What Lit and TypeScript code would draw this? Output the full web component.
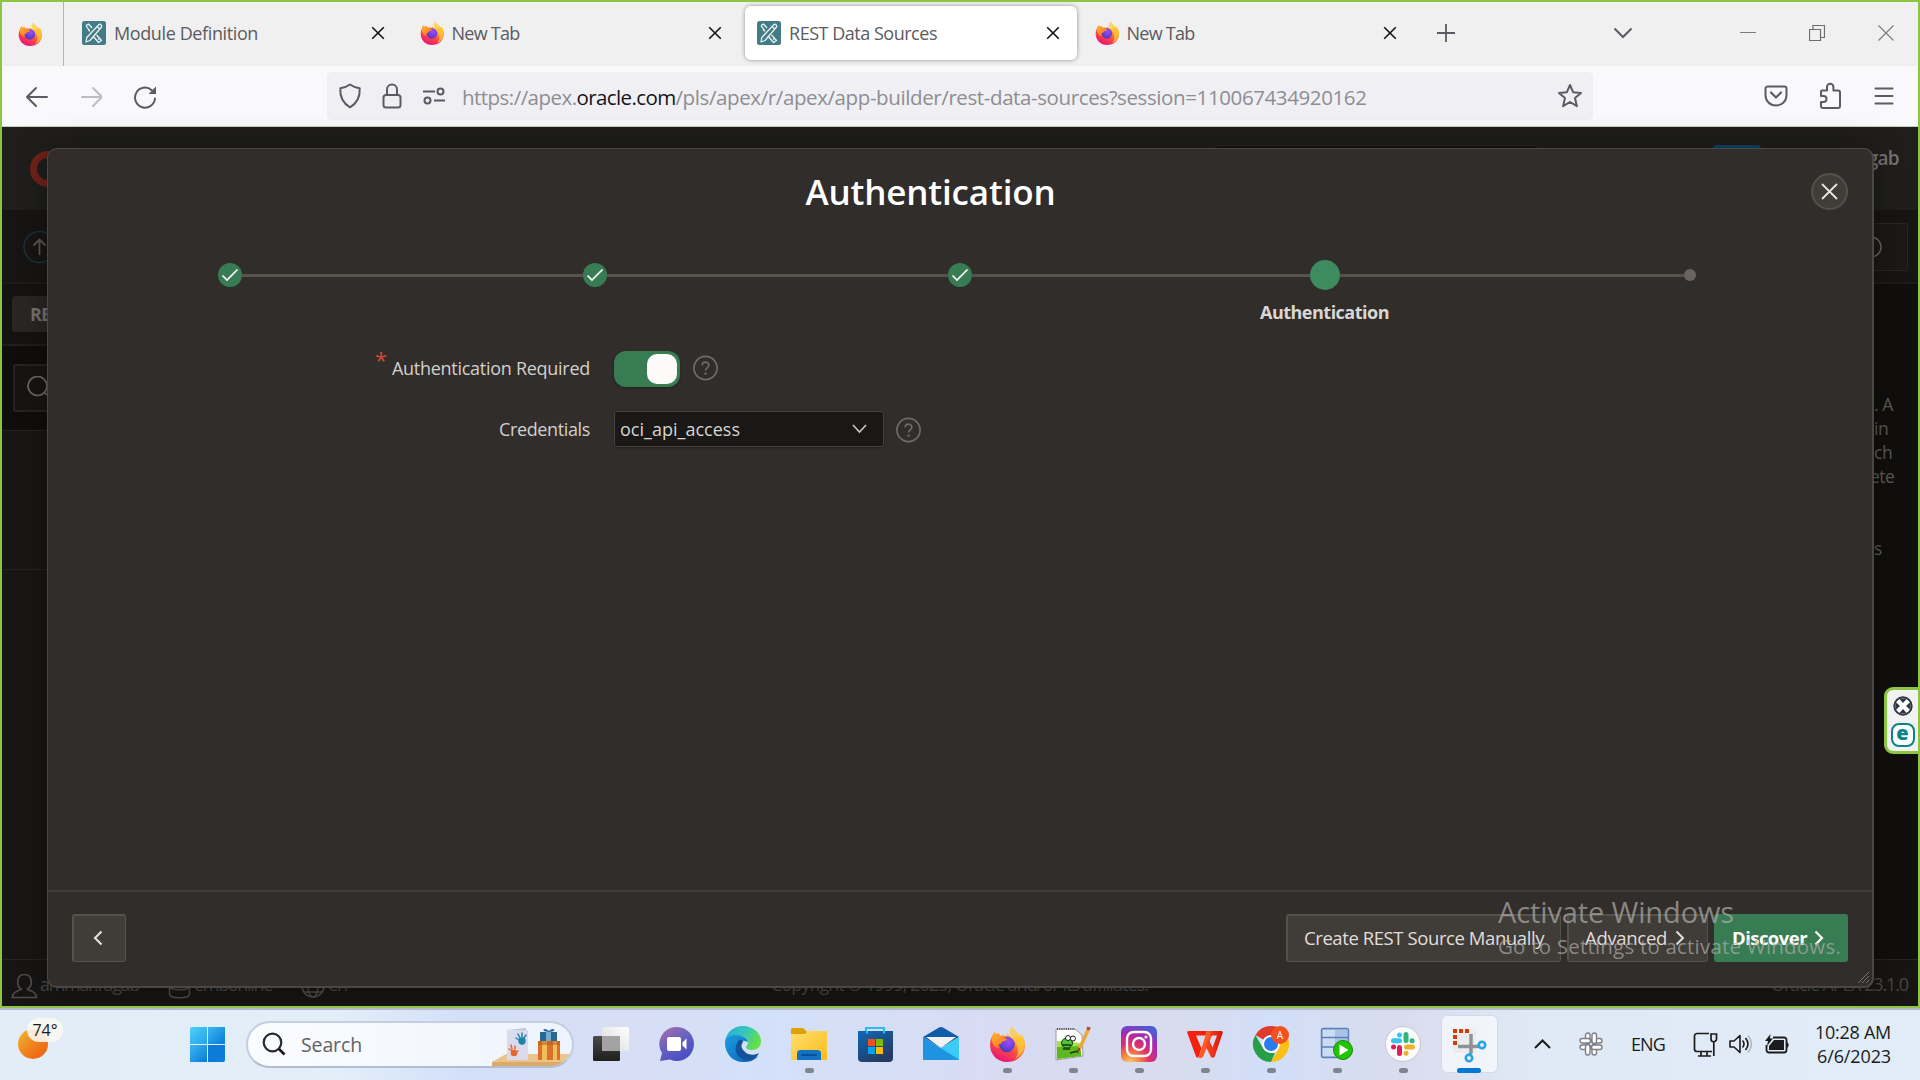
import { LitElement, html, css, svg, nothing } from "lit";
import { customElement, property } from "lit/decorators.js";
import { classMap } from "lit/directives/class-map.js";

/* Text whose tracking is computed so that it fills a given width. */
@customElement("fit-label")
class FitLabel extends LitElement {
  static styles = css`
    :host { display: inline-block; white-space: pre; flex: none; }
    .t { display: inline-block; white-space: pre; }
  `;
  @property({ type: Number }) w = 0;
  firstUpdated() {
    const el = this.renderRoot.querySelector(".t") as HTMLElement;
    const n = (this.textContent || "").length;
    const natural = el.getBoundingClientRect().width;
    if (this.w && n) {
      el.style.letterSpacing = `${(this.w - natural) / n}px`;
    }
    this.style.width = `${this.w}px`;
  }
  render() {
    return html`<span class="t"><slot></slot></span>`;
  }
}

const firefox = (s: number, id: string) => html`<svg width=${s} height=${s} viewBox="0 0 36 36">
  <defs>
    <linearGradient id="${id}a" x1=".8" y1="0" x2=".3" y2="1"><stop offset="0" stop-color="#fff44f"/><stop offset=".35" stop-color="#ffa32b"/><stop offset=".65" stop-color="#ff4a3f"/><stop offset="1" stop-color="#e5107f"/></linearGradient>
    <radialGradient id="${id}b" cx=".6" cy=".3" r=".8"><stop offset="0" stop-color="#a14bf5"/><stop offset=".7" stop-color="#5b3fd4"/><stop offset="1" stop-color="#43309c"/></radialGradient>
    <linearGradient id="${id}c" x1="0" y1="0" x2="1" y2="1"><stop offset="0" stop-color="#ffb62e"/><stop offset="1" stop-color="#ff6a2a"/></linearGradient>
  </defs>
  <path d="M23 0c-3 3-5 5-5 8l5 4 10-3c2 3 3 6 3 10 0 10-8 17-18 17S1 28 1 19c0-5 2-9 4-12l1 3 2-3 2 3c3-1 5-1 8 0 0-4 2-7 5-10z" fill="url(#${id}a)"/>
  <path d="M23 0c1 5 8 6 12 15 2 8-2 15-9 18 4-5 4-12 0-17-3-4-8-7-3-16z" fill="#ffc93a" opacity=".75"/>
  <circle cx="18" cy="18.500" r="7.800" fill="url(#${id}b)"/>
  <path d="M3 10c1-2 2-3 3-4l1 4 3-3 1 3c2 0 4 1 5 2l2 1c0 2-4 2-5 3s0 2-2 2-2 2-1 4c-5 0-8-6-7-12z" fill="url(#${id}c)"/>
</svg>`;

const apexIcon = html`<svg width="24" height="24" viewBox="0 0 24 24">
  <rect width="24" height="24" rx="2.500" fill="#437c85"/>
  <g fill="none" stroke="#e9f3f4" stroke-width="1.300" stroke-linejoin="round">
    <path d="M4 4.500 6.500 3 10 7M4 4.500 8 10.500M14.500 14l5 5.500-3 2-5.500-6.500"/>
    <path d="M17 3.500c1-1 3.500 1 2.500 2.500L8 19.500 4 21l.8-4.500z"/>
    <path d="M15 5.500 18 8M6 9.500 7.500 8.500M16 18.500l1.500-1"/>
  </g></svg>`;

const closeX = html`<svg width="14" height="14" viewBox="0 0 14 14"><path d="M1.200 1.200 12.800 12.800M12.800 1.200 1.200 12.800" stroke="#15141a" stroke-width="1.600"/></svg>`;

/* ---------- browser chrome ---------- */
@customElement("browser-chrome")
class BrowserChrome extends LitElement {
  static styles = css`
    :host { display: block; font-family: "Open Sans", "Noto Sans", sans-serif; }
    svg { display: block; flex: none; }
    .strip { height: 64px; background: #f0f0f0; display: flex; align-items: center; padding-bottom: 2px; box-sizing: border-box; }
    .pin { width: 62px; height: 64px; margin-bottom: -2px; box-sizing: border-box; border-right: 1px solid #b4b4b6; display: flex; align-items: center; padding-left: 16px; }
    .tabs { display: flex; padding-left: 3px; }
    .tab { width: 337.500px; height: 54px; box-sizing: border-box; padding: 0 3px; display: flex; }
    .body { flex: 1; border-radius: 6px; display: flex; align-items: center; padding: 0 17px 0 12px; color: #5b5b60; font-size: 18px; }
    .active .body { background: #fff; box-shadow: 0 0 4px rgba(0, 0, 0, 0.4); }
    .lbl { flex: 1; margin-left: 8px; }
    .plus { margin-left: 20px; }
    .chev { margin-left: 158px; }
    .win { margin-left: auto; padding-right: 24px; display: flex; align-items: center; gap: 53px; }
    .bar { height: 60px; background: #f9f9fb; border-bottom: 1px solid #c5d0c0; box-sizing: content-box; display: flex; align-items: center; padding-left: 20px; }
    .nav { display: flex; gap: 28px; width: 305px; margin-top: 2px; }
    .url { width: 1266px; height: 48px; border-radius: 5px; background: #f0f0f4; display: flex; align-items: center; box-sizing: border-box; padding: 0 10px 0 11px; gap: 18px; }
    .addr { display: flex; flex: 1; font-size: 20.500px; color: #8d8d93; margin: 2px 0 0 -2px; }
    .addr .dom { color: #15141a; }
    .end { display: flex; align-items: center; gap: 29px; margin-left: 171px; }
    .end svg:last-child { margin-left: 2px; }
  `;
  private tab(kind: string, title: string, w: number, id: string, active = false) {
    return html`<div class=${classMap({ tab: true, active })}><div class="body">
      ${kind === "apex" ? apexIcon : firefox(24, id)}
      <div class="lbl"><fit-label .w=${w}>${title}</fit-label></div>${closeX}
    </div></div>`;
  }
  render() {
    return html`
      <div class="strip">
        <div class="pin">${firefox(24, "p")}</div>
        <div class="tabs">
          ${this.tab("apex", "Module Definition", 144, "q")}
          ${this.tab("ff", "New Tab", 68, "r")}
          ${this.tab("apex", "REST Data Sources", 148, "s", true)}
          ${this.tab("ff", "New Tab", 68, "t")}
        </div>
        <svg class="plus" width="18" height="18" viewBox="0 0 18 18"><path d="M9 0V18M0 9H18" stroke="#5b5b66" stroke-width="1.800"/></svg>
        <svg class="chev" width="20" height="12" viewBox="0 0 20 12"><path d="M1.500 1.500 10 10 18.500 1.500" fill="none" stroke="#5b5b66" stroke-width="2"/></svg>
        <div class="win">
          <svg width="16" height="16" viewBox="0 0 16 16"><path d="M0 7.500H16" stroke="#7d7d7d"/></svg>
          <svg width="16" height="16" viewBox="0 0 16 16"><path d="M.5 4.500H11.500V15.500H.5zM4 4V.5H15.500V12.500H12" fill="none" stroke="#6d6d6d" stroke-width="1.200"/></svg>
          <svg width="16" height="16" viewBox="0 0 16 16"><path d="M.5.5 15.500 15.500M15.500.5.5 15.500" stroke="#7d7d7d" stroke-width="1.200"/></svg>
        </div>
      </div>
      <div class="bar">
        <div class="nav">
          <svg width="26" height="26" viewBox="0 0 26 26"><path d="M25 13H6M14 4 5 13l9 9" fill="none" stroke="#5b5b66" stroke-width="2" stroke-linecap="round" stroke-linejoin="round"/></svg>
          <svg width="26" height="26" viewBox="0 0 26 26"><path d="M6 13H25M17 4l9 9-9 9" fill="none" stroke="#bdbdc1" stroke-width="2" stroke-linecap="round" stroke-linejoin="round"/></svg>
          <svg width="26" height="26" viewBox="0 0 26 26"><path d="M25 14.500A10 10 0 1 1 21.500 6" fill="none" stroke="#5b5b66" stroke-width="2" stroke-linecap="round"/><path d="M26 2.500V10h-7.500z" fill="#5b5b66"/></svg>
        </div>
        <div class="url">
          <svg width="24" height="26" viewBox="0 0 24 26"><path d="M12 1.500c3 2.200 6 3.200 9.700 3.800.5 8.500-2.700 15-9.700 19C5 20.300 1.800 13.800 2.300 5.300 6 4.700 9 3.700 12 1.500z" fill="none" stroke="#5b5b66" stroke-width="2" stroke-linejoin="round"/></svg>
          <svg width="24" height="26" viewBox="0 0 24 26"><rect x="3.500" y="12" width="17" height="12.500" rx="2.500" fill="none" stroke="#5b5b66" stroke-width="2"/><path d="M7 12V6.500a5 5 0 0 1 10 0V12" fill="none" stroke="#5b5b66" stroke-width="2"/></svg>
          <svg width="24" height="18" viewBox="0 0 24 18"><g fill="none" stroke="#5b5b66" stroke-width="2"><path d="M1 4.500H13M12 13.500H23"/><circle cx="18.500" cy="4.500" r="3"/><circle cx="5.500" cy="13.500" r="3"/></g></svg>
          <div class="addr"><fit-label .w=${114.500}>https://apex.</fit-label><fit-label class="dom" .w=${99}>oracle.com</fit-label><fit-label .w=${691}>/pls/apex/r/apex/app-builder/rest-data-sources?session=110067434920162</fit-label></div>
          <svg width="26" height="26" viewBox="0 0 26 26"><path d="m13 2 3.100 7.200 7.900.7-6 5.200 1.900 8.100L13 19l-6.900 4.200L8 15.100 2 9.900l7.900-.7z" fill="none" stroke="#5b5b66" stroke-width="2" stroke-linejoin="round"/></svg>
        </div>
        <div class="end">
          <svg width="24" height="24" viewBox="0 0 24 24"><path d="M3.500 2.500h17a2 2 0 0 1 2 2V11c0 6-4.500 10.500-10.500 10.500S1.500 17 1.500 11V4.500a2 2 0 0 1 2-2z" fill="none" stroke="#5b5b66" stroke-width="2"/><path d="m7 8.500 5 5 5-5" fill="none" stroke="#5b5b66" stroke-width="2.200" stroke-linecap="round" stroke-linejoin="round"/></svg>
          <svg width="26" height="28" viewBox="0 0 26 28"><path d="M5 8.500h5V5a3.200 3.200 0 0 1 6.400 0v3.500H21a2 2 0 0 1 2 2V24a2 2 0 0 1-2 2H6a2 2 0 0 1-2-2v-4h2.500a3 3 0 0 0 0-6H4V9.500a1 1 0 0 1 1-1z" fill="none" stroke="#5b5b66" stroke-width="2" stroke-linejoin="round"/></svg>
          <svg width="20" height="20" viewBox="0 0 20 20"><path d="M1.500 2.500h17M1.500 10h17M1.500 17.500h17" stroke="#5b5b66" stroke-width="2" stroke-linecap="round"/></svg>
        </div>
      </div>`;
  }
}

/* ---------- dimmed page behind the dialog ---------- */
@customElement("dimmed-page")
class DimmedPage extends LitElement {
  static styles = css`
    :host { display: flex; flex-direction: column; height: 879px; background: #100f0d; font-family: "Open Sans", "Noto Sans", sans-serif; color: #75726f; }
    svg { display: block; flex: none; }
    .head { height: 83px; background: #1f1e1c; display: flex; justify-content: space-between; padding: 0 19px 0 28px; box-sizing: border-box; }
    .logo { padding-top: 24px; }
    .mid { margin-left: auto; display: flex; padding-top: 18px; }
    .find { width: 326px; height: 30px; border: 1px solid #2c2a26; background: #161513; border-radius: 4px; box-sizing: border-box; }
    .blue { width: 48px; height: 30px; border-radius: 4px; background: #0e4467; margin-left: 173px; }
    .user { width: 138px; text-align: right; font-size: 19px; letter-spacing: -0.7px; font-weight: 600; line-height: 28px; padding-top: 17px; }
    .crumb { height: 74px; background: #161513; border-bottom: 2px solid #1d1c1a; box-sizing: border-box; display: flex; align-items: center; justify-content: space-between; padding: 1px 10px 0 21px; }
    .help { width: 60px; height: 48px; border: 1px solid #292725; border-radius: 3px; background: #1a1917; display: flex; align-items: center; justify-content: center; box-sizing: border-box; padding-right: 13px; }
    .main { flex: 1; display: flex; background: #100f0d; }
    .left { width: 400px; background: #171614; }
    .tabrow { height: 62px; border-bottom: 2px solid #1f1e1c; background: #141311; box-sizing: border-box; padding: 12px 0 0 10px; }
    .rest { width: 180px; height: 36px; border-radius: 4px; background: #292623; font-size: 18px; letter-spacing: -1px; font-weight: 700; line-height: 36px; padding-left: 18px; box-sizing: border-box; }
    .sr { height: 85px; background: #0f0e0d; border-bottom: 1px solid #242321; box-sizing: border-box; padding: 18px 0 0 11px; }
    .box { width: 300px; height: 48px; border: 2px solid #262422; border-radius: 3px; background: #161513; box-sizing: border-box; padding: 10px 12px; }
    .blk { height: 139px; border-bottom: 1px solid #242321; box-sizing: border-box; }
    .right { margin-left: auto; padding: 108px 0 0; width: 48px; font-size: 17.500px; letter-spacing: -0.500px; line-height: 24px; color: #5d5b59; white-space: pre; }
    .foot { height: 47px; background: #161513; border-top: 1px solid #262523; box-sizing: border-box; display: flex; align-items: flex-start; padding: 7px 10px 0 9px; font-size: 18px; line-height: 34px; color: #474543; }
    .foot svg { margin-top: 6px; }
    .foot .db, .foot .gl { margin-left: 29px; }
    .foot fit-label { margin-left: 1px; }
    .foot .db + fit-label, .foot .gl + fit-label { margin-left: 3px; }
    .foot .copy { margin-left: 424px; }
    .foot .ver { margin-left: auto; }
  `;
  render() {
    return html`
      <div class="head">
        <div class="logo"><svg width="60" height="36" viewBox="0 0 60 36"><rect x="3.500" y="3.500" width="53" height="29" rx="14.500" fill="none" stroke="#6f2219" stroke-width="7"/></svg></div>
        <div class="mid"><div class="find"></div><div class="blue"></div></div>
        <div class="user">ammar ragab</div>
      </div>
      <div class="crumb">
        <svg width="34" height="34" viewBox="0 0 34 34"><circle cx="16.500" cy="17" r="15.500" fill="none" stroke="#1c323a" stroke-width="1.500"/><path d="M16.500 25V10M10.500 15.500l6-6 6 6" fill="none" stroke="#5a5856" stroke-width="1.800"/></svg>
        <div class="help"><svg width="22" height="22" viewBox="0 0 22 22"><circle cx="10" cy="11" r="10" fill="none" stroke="#666462" stroke-width="1.500"/></svg></div>
      </div>
      <div class="main">
        <div class="left">
          <div class="tabrow"><div class="rest">REST Data</div></div>
          <div class="sr"><div class="box"><svg width="24" height="24" viewBox="0 0 24 24"><circle cx="10.500" cy="10" r="9.500" fill="none" stroke="#6b6967" stroke-width="1.700"/><path d="m17.500 16.500 6 6" stroke="#6b6967" stroke-width="1.700"/></svg></div></div>
          <div class="blk"></div>
        </div>
        <div class="right"> . A
 in
 ch
ete


 s</div>
      </div>
      <div class="foot">
        <svg width="28" height="26" viewBox="0 0 28 26"><path d="M13.500 1.500c9 0 8 13 3 14.500 1 2 9 1.500 9 8.500H1.300c0-7 8-6.500 9-8.500C5.500 14.500 4.500 1.500 13.500 1.500z" fill="none" stroke="#4e4c4a" stroke-width="1.700"/></svg>
        <fit-label .w=${99}>ammar.ragab</fit-label>
        <svg class="db" width="23" height="26" viewBox="0 0 23 26"><path d="M1.500 5c0-5 20-5 20 0v16c0 5-20 5-20 0zc0 5 20 5 20 0M1.500 13c0 5 20 5 20 0" fill="none" stroke="#4e4c4a" stroke-width="1.500"/></svg>
        <fit-label .w=${78}>embonline</fit-label>
        <svg class="gl" width="24" height="26" viewBox="0 0 24 26"><g fill="none" stroke="#4e4c4a" stroke-width="1.500"><circle cx="12" cy="13" r="11"/><ellipse cx="12" cy="13" rx="5" ry="11"/><path d="M1 13H23M3 7H21M3 19H21"/></g></svg>
        <fit-label .w=${19}>en</fit-label>
        <fit-label class="copy" .w=${377}>Copyright © 1999, 2023, Oracle and/or its affiliates.</fit-label>
        <fit-label class="ver" .w=${137}>Oracle APEX 23.1.0</fit-label>
      </div>`;
  }
}

/* ---------- wizard dialog ---------- */
const helpIcon = html`<svg class="q" width="25" height="26" viewBox="0 0 25 26"><circle cx="12.500" cy="13" r="11.600" fill="none" stroke="#6f6b67" stroke-width="1.700"/><path d="M9.200 10.200c0-4.200 6.600-4.200 6.600 0 0 2.600-3.300 2.600-3.300 5.300" fill="none" stroke="#6f6b67" stroke-width="1.700"/><circle cx="12.500" cy="18.600" r="1.200" fill="#6f6b67"/></svg>`;
const next = (w: number) => html`<svg width="10" height="16" viewBox="0 0 10 16"><path d="M1.500 1.500 8 8l-6.500 6.500" fill="none" stroke="currentColor" stroke-width=${w}/></svg>`;

@customElement("wizard-dialog")
class WizardDialog extends LitElement {
  static styles = css`
    :host { display: flex; flex-direction: column; box-sizing: border-box; background: #312d2a; border: 1px solid #4b4844; border-right-width: 2px; border-bottom-width: 2px; border-radius: 10px; box-shadow: 0 0 30px rgba(0, 0, 0, 0.35); font-family: "Open Sans", "Noto Sans", sans-serif; color: #d2d0cd; font-size: 18px; overflow: hidden; }
    svg { display: block; flex: none; }
    .head { height: 85px; display: grid; grid-template-columns: 1fr auto 1fr; align-items: center; padding: 0 24px 0 0; box-sizing: border-box; }
    .title { font-size: 35px; font-weight: 600; color: #fff; grid-column: 2; line-height: 48px; margin: 1px 35px 0 0; }
    .x { justify-self: end; width: 37px; height: 37px; border-radius: 50%; border: 2px solid #55514a; background: #403c38; box-sizing: border-box; display: grid; place-items: center; color: #e6e4e2; margin-bottom: 1px; }
    .steps { display: grid; grid-template-columns: repeat(5, 365px); height: 97px; margin-left: -1px; align-items: start; }
    .step { display: flex; flex-direction: column; align-items: center; }
    .rail { height: 30px; margin-top: 26px; width: 100%; display: flex; align-items: center; }
    .seg { flex: 1; height: 3px; background: #57534b; }
    .seg.none { background: none; }
    .dot { width: 24px; height: 24px; border-radius: 50%; background: #387c53; display: grid; place-items: center; }
    .cur .dot { width: 30px; height: 30px; background: #3d8c60; }
    .todo .dot { width: 12px; height: 12px; background: #6b645e; }
    .name { font-weight: 700; margin-top: 10px; line-height: 24px; color: #d9d7d4; }
    .form { flex: 1; display: grid; grid-template-columns: 542px 1fr; column-gap: 24px; grid-template-rows: 36px 36px; row-gap: 24px; padding-top: 20px; align-items: center; }
    .lab { display: flex; justify-content: flex-end; padding-bottom: 2px; }
    .low { padding-bottom: 0; }
    .star { color: #d04a36; font-size: 22px; line-height: 20px; height: 20px; margin: -7px 5px 0 0; width: 12px; }
    .ctl { display: flex; align-items: center; gap: 12px; }
    .q { margin: -2px 0 0 1px; }
    .low .q { margin-top: 2px; }
    .switch { width: 66px; height: 36px; border-radius: 12px; background: #387c53; box-sizing: border-box; padding: 3px 3px 3px 33px; box-shadow: 0 1px 3px rgba(0, 0, 0, 0.3); }
    .knob { width: 30px; height: 30px; border-radius: 10px; background: #fcfbfa; }
    .select { width: 270px; height: 36px; box-sizing: border-box; border: 1px solid #45413e; border-radius: 3px; background: #191816; display: flex; align-items: center; justify-content: space-between; padding: 0 16px 0 5px; color: #d6d4d1; box-shadow: 0 1px 3px rgba(0, 0, 0, 0.3); }
    .low .q { margin-left: 0; }
    .foot { height: 96px; box-sizing: border-box; border-top: 2px solid #403c39; padding: 0 24px 3px 24px; display: flex; align-items: center; gap: 6px; }
    .btn { height: 48px; box-sizing: border-box; border: 1px solid #55524b; border-top-width: 2px; border-left-width: 2px; border-radius: 3px; background: #403c37; display: flex; align-items: center; color: #e0dedb; line-height: 40px; font-size: 18.500px; padding: 0 16px; }
    .back { width: 54px; justify-content: center; padding: 0 3px 0 0; margin-right: auto; }
    .adv { gap: 8px; width: 141px; }
    .create { width: 275px; }
    .go { background: #387c53; border-color: #387c53; color: #fff; font-weight: 700; width: 134px; gap: 7px; }
  `;
  private step(i: number) {
    const kind = i < 3 ? "done" : i === 3 ? "cur" : "todo";
    return html`<div class="step ${kind}">
      <div class="rail">
        <div class="seg ${i === 0 ? "none" : ""}"></div>
        <div class="dot">${kind === "done" ? html`<svg width="18" height="14" viewBox="0 0 18 14"><path d="M1.500 7.500 6 12 16.500 1.500" fill="none" stroke="#fff" stroke-width="1.700"/></svg>` : nothing}</div>
        <div class="seg ${i === 4 ? "none" : ""}"></div>
      </div>
      ${kind === "cur" ? html`<div class="name"><fit-label .w=${129}>Authentication</fit-label></div>` : nothing}
    </div>`;
  }
  render() {
    return html`
      <div class="head">
        <div class="title"><fit-label .w=${250}>Authentication</fit-label></div>
        <div class="x"><svg width="17" height="17" viewBox="0 0 17 17"><path d="m1 1 15 15M16 1 1 16" stroke="currentColor" stroke-width="1.800"/></svg></div>
      </div>
      <div class="steps">${[0, 1, 2, 3, 4].map((i) => this.step(i))}</div>
      <div class="form">
        <div class="lab"><span class="star">*</span><fit-label .w=${198}>Authentication Required</fit-label></div>
        <div class="ctl"><div class="switch"><div class="knob"></div></div>${helpIcon}</div>
        <div class="lab low"><fit-label .w=${91}>Credentials</fit-label></div>
        <div class="ctl low"><div class="select"><fit-label .w=${120}>oci_api_access</fit-label><svg width="15" height="10" viewBox="0 0 15 10"><path d="m1 1 6.500 7L14 1" fill="none" stroke="#c9c7c4" stroke-width="1.600"/></svg></div>${helpIcon}</div>
      </div>
      <div class="foot">
        <div class="btn back"><svg width="10" height="16" viewBox="0 0 10 16"><path d="M8.500 1.500 2 8l6.500 6.500" fill="none" stroke="currentColor" stroke-width="2.200"/></svg></div>
        <div class="btn create"><fit-label .w=${240}>Create REST Source Manually</fit-label></div>
        <div class="btn adv"><fit-label .w=${82}>Advanced</fit-label>${next(2)}</div>
        <div class="btn go"><fit-label .w=${75}>Discover</fit-label>${next(2.2)}</div>
      </div>`;
  }
}

/* ---------- taskbar ---------- */
const apps: Array<{ id: string; run: boolean; icon: unknown }> = [
  { id: "view", run: false, icon: svg`<defs><linearGradient id="tv" x2="0" y2="1"><stop stop-color="#4a4a48"/><stop offset="1" stop-color="#1e1e1d"/></linearGradient><linearGradient id="tw" x1="1" x2="0" y2="1"><stop stop-color="#fff"/><stop offset="1" stop-color="#d8d8d8"/></linearGradient></defs><rect x="0" y="10" width="27" height="25" rx="1.500" fill="url(#tv)"/><rect x="9" y="1" width="27" height="24" rx="1.500" fill="url(#tw)"/><path d="M9 10H27V25H10.500A1.500 1.500 0 0 1 9 23.500z" fill="#a3a3a3"/>` },
  { id: "chat", run: false, icon: svg`<defs><linearGradient id="ch" x1="0" y1="0" x2=".6" y2="1"><stop stop-color="#b06fa8"/><stop offset=".5" stop-color="#6a62bf"/><stop offset="1" stop-color="#4a4fc4"/></linearGradient></defs><path d="M18 1a17 17 0 1 1-7 32.500L1 35l2-8A17 17 0 0 1 18 1z" fill="url(#ch)"/><rect x="8" y="11" width="14" height="14" rx="2" fill="#fff"/><path d="m23.500 16.500 4-4v11l-4-4z" fill="#fff"/>` },
  { id: "edge", run: false, icon: svg`<defs><linearGradient id="e1" x2="1" y2=".4"><stop stop-color="#2aa8e0"/><stop offset=".6" stop-color="#36c9b5"/><stop offset="1" stop-color="#65df4a"/></linearGradient><linearGradient id="e2" x2="1" y2="1"><stop stop-color="#1b9de2"/><stop offset="1" stop-color="#0a61b5"/></linearGradient></defs><path d="M0 16C1 6 9 0 18 0c10 0 18 7 18 15 0 6-4 9-9 9-4 0-6-1-6-3 0-1 2-2 2-5 0-5-6-7-11-6C6 11 2 13 0 16z" fill="url(#e1)"/><path d="M0 17c0-6 6-8 11-8 6 0 12 3 12 7-9-5-14 8-6 14 5 4 11 3 16 0-4 5-9 6-15 6C8 36 0 28 0 17z" fill="url(#e2)"/><path d="M14 14c-6 7-4 16 5 20 6 2 12-1 15-7-5 3-11 2-14-1s-5-6-2-10c0-1-2-3-4-2z" fill="#12539c"/>` },
  { id: "files", run: true, icon: svg`<defs><linearGradient id="f1" x2="1" y2="1"><stop stop-color="#ffdf70"/><stop offset="1" stop-color="#fbbc1b"/></linearGradient></defs><path d="M0 3.500A1.500 1.500 0 0 1 1.500 2H12l4 4H36V12H0z" fill="#e0a000"/><path d="M0 8h14l3-3h17.500A1.500 1.500 0 0 1 36 6.500V33a1 1 0 0 1-1 1H1a1 1 0 0 1-1-1z" fill="url(#f1)"/><path d="M6 34V27.500A3.500 3.500 0 0 1 9.500 24h17a3.500 3.500 0 0 1 3.500 3.500V34z" fill="#1273c4"/><path d="M11 29H25" stroke="#0a4f92" stroke-width="1.800" stroke-linecap="round"/>` },
  { id: "store", run: false, icon: svg`<defs><linearGradient id="s1" x2="0.6" y2="1"><stop stop-color="#0f68b8"/><stop offset="1" stop-color="#253a62"/></linearGradient></defs><path d="M9 8V2h18v6" fill="none" stroke="#2bbdf2" stroke-width="2.200"/><path d="M1 5H36V32a4 4 0 0 1-4 4H5a4 4 0 0 1-4-4z" fill="url(#s1)"/><path d="M10 5v2.500M27 5v2.500" stroke="#2bbdf2" stroke-width="2.200"/><path d="M11 13h7v7h-7z" fill="#f25022"/><path d="M19 13h7v7h-7z" fill="#7fba00"/><path d="M11 21h7v7h-7z" fill="#00a4ef"/><path d="M19 21h7v7h-7z" fill="#ffb900"/>` },
  { id: "mail", run: false, icon: svg`<path d="M0 11 16 1.500a4 4 0 0 1 4 0L36 11 18 22z" fill="#0f5da8"/><path d="M3 11H33L18 22z" fill="#f2f2f2"/><path d="M36 11V33a1 1 0 0 1-1 1H1L18 22z" fill="#3ccbf4"/><path d="M0 11 36 33.500a1 1 0 0 1-1 .5H1a1 1 0 0 1-1-1z" fill="#1f93e0"/>` },
  { id: "firefox", run: true, icon: null },
  { id: "npp", run: true, icon: svg`<path d="M1 3H20L27 9 28 30 1 34z" fill="#fff" stroke="#9a9a9a"/><path d="M2 3h18" stroke="#555" stroke-width="2" stroke-dasharray="1 1.200"/><path d="M2 15 26 17v13L2 33z" fill="#a8e04a"/><path d="M2 21 26 20v10L2 33z" fill="#3aa60f" opacity=".7"/><ellipse cx="12" cy="17" rx="5.500" ry="5" fill="#4fc33a" stroke="#163d0d"/><circle cx="13" cy="12" r="2.500" fill="#fff" stroke="#222"/><circle cx="18" cy="12.500" r="2.500" fill="#fff" stroke="#222"/><path d="M7 19h9M8 23h7M15 27l8-2" stroke="#143d0b" stroke-width="1.500"/><path d="M33.500 3 24 24" stroke="#e8a93a" stroke-width="3.500"/><path d="m24.500 22-2.500 5" stroke="#7a4a14" stroke-width="2"/><path d="m34 1-1 3" stroke="#b04a55" stroke-width="3.500"/>` },
  { id: "insta", run: true, icon: svg`<defs><radialGradient id="i1" cx=".25" cy="1.050" r="1.100"><stop stop-color="#fed373"/><stop offset=".25" stop-color="#f5853f"/><stop offset=".5" stop-color="#e1306c"/><stop offset=".8" stop-color="#a02bb5"/><stop offset="1" stop-color="#4f5bd5"/></radialGradient></defs><rect width="36" height="36" rx="6" fill="url(#i1)"/><rect x="6" y="6" width="24" height="24" rx="6.500" fill="none" stroke="#fff" stroke-width="2.400"/><circle cx="18" cy="18" r="6" fill="none" stroke="#fff" stroke-width="2.400"/><circle cx="25" cy="11" r="1.600" fill="#fff"/>` },
  { id: "wps", run: true, icon: svg`<defs><linearGradient id="w1" x2="1"><stop stop-color="#ff4a1f"/><stop offset="1" stop-color="#d5140a"/></linearGradient></defs><path d="M1.500 5H20l-1.500 4.500H9l5.500 13L11.500 31q-1.500 1.500-2.500-.5L.3 7Q0 5 1.500 5z" fill="#f5200f"/><path d="M20 5H27L16 31q-2 2-4.500.5z" fill="#ff5a22"/><path d="M24 5H34.700q1.500.3 1 2L27.500 31q-1.500 1.500-3.500 0L18.500 20l3-7 4 8.500L30 9.500H22.500z" fill="url(#w1)"/>` },
  { id: "chrome", run: true, icon: svg`<path d="M18 18 2.400 9A18 18 0 0 1 33.600 9z" fill="#de3a2d"/><path d="M18 9H33.600A18 18 0 0 1 18 36L26 22z" fill="#fbc116"/><path d="M2.400 9 10.200 22.500 18 27l4 0-4 9A18 18 0 0 1 2.400 9z" fill="#289e49"/><circle cx="18" cy="18" r="9" fill="#fff"/><circle cx="18" cy="18" r="7" fill="#2b7bf0"/><circle cx="27" cy="9" r="9" fill="#f4511e"/><text x="27" y="12.500" font-size="10" text-anchor="middle" fill="#fff" font-family="Open Sans, sans-serif">A</text>` },
  { id: "sqldev", run: true, icon: svg`<rect x="2.500" y="2.500" width="27" height="29" rx="2" fill="#a9c3e6" stroke="#5b82b8" stroke-width="1.400"/><path d="M4 4H16V30H4z" fill="#dbe8f8" opacity=".7"/><path d="M2.500 11.500h27M2.500 21h27" stroke="#5b82b8" stroke-width="1.600"/><circle cx="24" cy="24" r="9.500" fill="#1fc600" stroke="#1a8a08"/><path d="m20.500 18.500 9 5.500-9 5.500z" fill="#fff"/>` },
  { id: "slack", run: true, icon: svg`<circle cx="18" cy="18" r="17.500" fill="#fbfbfc" stroke="#c5c8d0"/><g stroke-width="5" stroke-linecap="round"><path d="M14.500 9v.1M8.500 14.700h6" stroke="#36c5f0"/><path d="M21 8.500v6M27 14.700h.1" stroke="#2eb67d"/><path d="M21.500 21h6M21 27.200v.1" stroke="#ecb22e"/><path d="M14.500 21.500v6M8.500 21h.1" stroke="#e01e5a"/></g>` },
  { id: "snip", run: false, icon: svg`<rect x="2" y="3" width="23" height="24" rx="1" fill="#ececef"/><path d="M2 5H18" stroke="#d83b01" stroke-width="4" stroke-dasharray="4 2"/><path d="M4 9v12" stroke="#d83b01" stroke-width="4" stroke-dasharray="4 2"/><path d="M20 8v18q0 2-2 3M7 20.500h18q2 0 3-1" fill="none" stroke="#8d9299" stroke-width="3.500"/><circle cx="31" cy="19" r="3.200" fill="none" stroke="#25a4e8" stroke-width="2.600"/><circle cx="18" cy="32" r="3.200" fill="none" stroke="#25a4e8" stroke-width="2.600"/>` },
];

@customElement("task-bar")
class TaskBar extends LitElement {
  static styles = css`
    :host { display: flex; height: 72px; box-sizing: border-box; border-top: 2px solid #b2b9cb; background: linear-gradient(90deg, #e2edf7 0, #e2eef8 340px, #d3e0f8 460px, #d7def5 640px, #d3e1f8 760px, #d8dcf4 980px, #d8dcee 1180px, #d2dff8 1270px, #d9dced 1400px, #e0e9f6 1540px, #e0edf8 1920px); align-items: center; padding-bottom: 2px; font-family: "Open Sans", "Noto Sans", sans-serif; color: #1b1b1b; }
    svg { display: block; flex: none; overflow: visible; }
    .weather { width: 190px; height: 68px; padding-left: 18px; box-sizing: border-box; position: relative; }
    .sun { width: 30px; height: 30px; border-radius: 50%; margin-top: 19px; background: linear-gradient(135deg, #ebb22c 10%, #f0781a 60%, #ee5d10); }
    .temp { position: absolute; left: 27px; top: 8px; width: 36px; height: 24px; border-radius: 12px; background: rgba(252, 248, 242, 0.88); font-size: 16px; line-height: 24px; text-align: center; }
    .start { display: grid; grid-template-columns: 17px 17px; gap: 1px; }
    .start i { height: 17px; background: linear-gradient(135deg, #3cb7f0, #0a7ad6); }
    .start i:first-child { background: linear-gradient(135deg, #4fd0fb, #25a1e6); border-radius: 2px 0 0 0; }
    .start i:last-child { background: #0c7cd8; border-radius: 0 0 2px 0; }
    .search { margin-left: 21px; width: 328px; height: 47px; box-sizing: border-box; border: 2px solid #c3cede; border-bottom-color: #b1bdd0; border-radius: 24px; background: linear-gradient(90deg, #fbfcfe, #eef4fd); display: flex; align-items: center; padding-left: 14px; font-size: 19.500px; color: #5f6368; overflow: hidden; }
    .search fit-label { margin-left: 15px; }
    .search .art { margin-left: auto; margin-top: 5px; }
    .apps { display: flex; margin-left: 4px; }
    .app { width: 66px; height: 68px; position: relative; display: grid; place-items: center; box-sizing: border-box; }
    .dot { position: absolute; left: 29px; bottom: 5px; width: 9px; height: 5px; border-radius: 3px; background: #7f858f; }
    .snip::before { content: ""; position: absolute; left: 5px; top: 5px; width: 57px; height: 58px; box-sizing: border-box; border-radius: 6px; background: rgba(248, 250, 254, 0.75); border: 1px solid rgba(200, 208, 222, 0.7); }
    .snip svg { position: relative; }
    .snip .dot { left: 21px; width: 24px; background: #0078d4; bottom: 5px; }
    .tray { margin-left: auto; display: flex; align-items: center; padding-right: 29px; font-size: 18px; }
    .clock { text-align: right; line-height: 24px; margin-left: 25px; }
    .clock div { display: flex; justify-content: flex-end; }
    .m1 { margin-left: 28px; } .m2 { margin-left: 28px; } .m3 { margin-left: 28px; } .m4 { margin-left: 11px; } .m5 { margin-left: 11px; }
  `;
  render() {
    return html`
      <div class="weather"><div class="sun"></div><div class="temp">74°</div></div>
      <div class="start"><i></i><i></i><i></i><i></i></div>
      <div class="search">
        <svg width="24" height="24" viewBox="0 0 24 24"><circle cx="10.500" cy="10.500" r="8.800" fill="none" stroke="#2b2b2b" stroke-width="2.200"/><path d="m17 17 5.500 5.500" stroke="#1b1b1b" stroke-width="2.600"/></svg>
        <fit-label .w=${61}>Search</fit-label>
        <svg class="art" width="80" height="40" viewBox="0 0 80 40">
          <path d="M0 35 14 27H80V40H0z" fill="#e9c48c"/><path d="M0 35H80V40H0z" fill="#dba968"/>
          <path d="M15 3 34 1v31H15z" fill="#bcc3d4"/><path d="M15 3h21v30H15z" fill="#dcdbee"/>
          <g stroke-linecap="round" stroke-width="1.500" fill="none"><path d="M24 11l3 2M26 7l2 4M30 6v4M34 8l-2 3" stroke="#1f85a8"/><path d="M17 22l3 2M19 18l1 4M23 19v3M26 24l-2 1" stroke="#e5682a"/></g>
          <circle cx="30" cy="14" r="3.700" fill="#1f85a8"/><circle cx="22" cy="26" r="3.300" fill="#e5682a"/>
          <path d="M48 5h17v10H48z" fill="#29688f"/><path d="M54 5h5v10h-5z" fill="#78add0"/><path d="M57 5c-9 0-6-6 0-1 5-5 9 1 0 1z" fill="#276fb0"/>
          <path d="M46 14h22v19H46z" fill="#d9702b"/><path d="M50 14h5v19h-5zM61 14h4v19h-4z" fill="#f0bd59"/><path d="M46 14h22v4H46z" fill="#bd551c" opacity=".5"/>
        </svg>
      </div>
      <div class="apps">
        ${apps.map((a) => html`<div class="app ${a.id}">
          ${a.icon ? html`<svg width="36" height="36" viewBox="0 0 36 36">${a.icon}</svg>` : firefox(36, "z")}
          ${a.run || a.id === "snip" ? html`<span class="dot"></span>` : nothing}
        </div>`)}
      </div>
      <div class="tray">
        <svg width="17" height="10" viewBox="0 0 17 10"><path d="m1 9 7.500-7.500L16 9" fill="none" stroke="#1b1b1b" stroke-width="2"/></svg>
        <svg class="m1" width="24" height="24" viewBox="0 0 24 24"><g fill="#fff" stroke="#7d7f85" stroke-width="1.400"><rect x="6.500" y="1" width="4.500" height="10.500" rx="2.200"/><rect x="13" y="12.500" width="4.500" height="10.500" rx="2.200"/><rect x="12.500" y="6.500" width="10.500" height="4.500" rx="2.200"/><rect x="1" y="13" width="10.500" height="4.500" rx="2.200"/><rect x="13" y="1" width="4.500" height="10.500" rx="2.200"/><rect x="6.500" y="12.500" width="4.500" height="10.500" rx="2.200"/><rect x="1" y="6.500" width="10.500" height="4.500" rx="2.200"/><rect x="12.500" y="13" width="10.500" height="4.500" rx="2.200"/></g></svg>
        <fit-label class="m2" .w=${34}>ENG</fit-label>
        <svg class="m3" width="25" height="25" viewBox="0 0 25 25"><path d="M16 1.500H4A2.500 2.500 0 0 0 1.500 4v13A2.500 2.500 0 0 0 4 19.500h15M8 19.500V24M14 19.500V24M5 24H18" fill="none" stroke="#1b1b1b" stroke-width="1.700"/><path d="M18 2h5.500v5a2.700 2.700 0 0 1-5.500 0zM20.800 10v14" fill="none" stroke="#1b1b1b" stroke-width="1.700"/></svg>
        <svg class="m4" width="25" height="20" viewBox="0 0 25 20"><path d="M1 7h4l6-5.500v17L5 13H1z" fill="none" stroke="#1b1b1b" stroke-width="1.600" stroke-linejoin="round"/><path d="M13.500 6.500q3 3.500 0 7M16.500 4q5 6 0 12" fill="none" stroke="#1b1b1b" stroke-width="1.600"/><path d="M19 1.500q7 8.500 0 17" fill="none" stroke="#aeb5bd" stroke-width="1.500"/></svg>
        <svg class="m5" width="25" height="20" viewBox="0 0 25 20"><path d="M8 3.500h11A2.500 2.500 0 0 1 21.500 6v10a2.500 2.500 0 0 1-2.500 2.500H4A2.500 2.500 0 0 1 1.500 16v-5" fill="none" stroke="#1b1b1b" stroke-width="1.800"/><path d="M9 6h10v10H4v-4z" fill="#1b1b1b"/><path d="M22 8q3.500 3 0 6z" fill="#1b1b1b"/><path d="M5.500 0 0 7h3l-1 5 6-7.500H5z" fill="#1b1b1b"/></svg>
        <div class="clock"><div><fit-label .w=${76}>10:28 AM</fit-label></div><div><fit-label .w=${74}>6/6/2023</fit-label></div></div>
      </div>`;
  }
}

/* ---------- desktop ---------- */
@customElement("app-root")
class AppRoot extends LitElement {
  static styles = css`
    :host { display: block; width: 1920px; height: 1080px; overflow: hidden; position: relative; font-family: "Open Sans", "Noto Sans", sans-serif; }
    svg { display: block; }
    .window { height: 1008px; box-sizing: border-box; border: 2px solid #8cc540; overflow: hidden; position: relative; }
    .dialog { position: absolute; left: 45px; top: 146px; width: 1827px; height: 840px; }
    .grip { position: absolute; left: 1857px; top: 971px; }
    .widget { position: absolute; left: 1884px; top: 687px; width: 35px; height: 67px; box-sizing: border-box; border: 3px solid #8cc540; border-right-width: 1px; border-radius: 9px 0 0 9px; background: #f2f2f3; display: flex; flex-direction: column; align-items: center; gap: 7px; padding-top: 6px; }
    .mark { position: absolute; left: 1498px; top: 892px; color: rgba(170, 170, 168, 0.72); display: flex; flex-direction: column; }
    .big { font-size: 29px; line-height: 40px; height: 40px; }
    .small { font-size: 20.500px; line-height: 29px; }
    .badge { width: 24px; height: 24px; box-sizing: border-box; border: 2px solid #0a8389; border-radius: 8px; background: #fff; color: #0a8389; font-weight: 800; font-size: 20px; line-height: 15px; height: 24px; text-align: center; }
  `;
  render() {
    return html`
      <div class="window">
        <browser-chrome></browser-chrome>
        <dimmed-page></dimmed-page>
        <wizard-dialog class="dialog"></wizard-dialog>
      </div>
      <task-bar></task-bar>
      <svg class="grip" width="14" height="14" viewBox="0 0 14 14"><path d="M1 12 12 1M5 12l7-7M9 12l3-3" stroke="#77736f" stroke-width="1"/></svg>
      <div class="widget">
        <svg width="20" height="20" viewBox="0 0 20 20"><circle cx="10" cy="10" r="8.700" fill="#fff" stroke="#2f3540" stroke-width="2"/><path d="M10 7 6 2.500h8zM10 13l-4 4.500h8zM7 10 2.500 6v8zM13 10l4.500-4v8z" fill="#2f3540"/></svg>
        <div class="badge">e</div>
      </div>
      <div class="mark"><fit-label class="big" .w=${236}>Activate Windows</fit-label><fit-label class="small" .w=${343}>Go to Settings to activate Windows.</fit-label></div>`;
  }
}
